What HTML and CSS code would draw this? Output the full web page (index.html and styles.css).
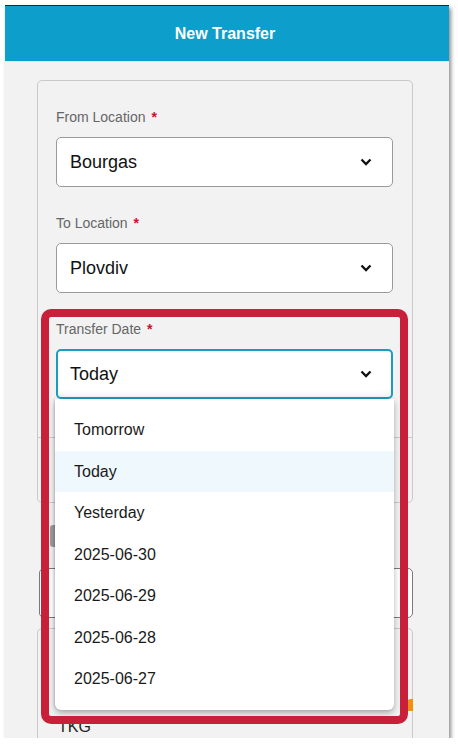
FILE: index.html
```html
<!DOCTYPE html>
<html>
    <head>
        <meta charset="utf-8">
        <title>New Transfer</title>
        <link rel="stylesheet" href="styles.css">
    </head>
    <body>
        <div class="screen">
            <header class="topbar">New Transfer</header>

            <main class="content">
                <section class="card">
                    <div class="field">
                        <label class="field-label">From Location <span class="req">*</span></label>
                        <div class="select">
                            <span>Bourgas</span>
                            <svg class="chevron" width="12" height="8" viewBox="0 0 12 8"><path d="M1.5 1.5l4.5 4.5 4.5-4.5"/></svg>
                        </div>
                    </div>

                    <div class="field">
                        <label class="field-label">To Location <span class="req">*</span></label>
                        <div class="select">
                            <span>Plovdiv</span>
                            <svg class="chevron" width="12" height="8" viewBox="0 0 12 8"><path d="M1.5 1.5l4.5 4.5 4.5-4.5"/></svg>
                        </div>
                    </div>

                    <div class="field field-open">
                        <label class="field-label">Transfer Date <span class="req">*</span></label>
                        <div class="select is-focused">
                            <span>Today</span>
                            <svg class="chevron" width="12" height="8" viewBox="0 0 12 8"><path d="M1.5 1.5l4.5 4.5 4.5-4.5"/></svg>
                        </div>
                        <ul class="dropdown">
                            <li>Tomorrow</li>
                            <li class="active">Today</li>
                            <li>Yesterday</li>
                            <li>2025-06-30</li>
                            <li>2025-06-29</li>
                            <li>2025-06-28</li>
                            <li>2025-06-27</li>
                        </ul>
                    </div>

                    <div class="card-foot"></div>
                </section>

                <div class="btn-stub"></div>
                <div class="input-box"></div>

                <section class="card card-items">
                    <span class="item-code">TKG</span>
                    <span class="flag"></span>
                </section>
            </main>

            <div class="highlight"></div>
        </div>
    </body>
</html>
```

FILE: styles.css
```css
body {
    margin: 0;
    padding: 0;
    background: #ffffff;
    font-family: "Liberation Sans", Arial, sans-serif;
}

.screen {
    position: relative;
    margin: 5px 0 0 5px;
    width: 444px;
    height: 733px;
    overflow: hidden;
    background: #f2f2f2;
    border-top: 1px solid #1e2a30;
    box-sizing: border-box;
    box-shadow: 2px 3px 4px rgba(0, 0, 0, 0.45);
}

.topbar {
    height: 55px;
    line-height: 55px;
    background: #0d9ecb;
    border-bottom: 1px solid #d3ebf3;
    color: #ffffff;
    font-size: 16px;
    font-weight: bold;
    text-align: center;
    padding-right: 4px;
}

.content {
    padding: 18px 36px 0 32px;
}

.card {
    border: 1px solid #c9c9c9;
    border-radius: 5px;
    padding: 28px 19px 0 18px;
}

.field + .field {
    margin-top: 28px;
}

.field-label {
    display: block;
    font-size: 14px;
    line-height: 17px;
    color: #666666;
    margin-bottom: 11px;
}

.req {
    color: #c8102e;
    font-weight: bold;
    margin-left: 2px;
}

.select {
    display: flex;
    align-items: center;
    justify-content: space-between;
    height: 50px;
    box-sizing: border-box;
    padding: 0 20px 0 13px;
    background: #ffffff;
    border: 1px solid #9a9a9a;
    border-radius: 5px;
    font-size: 18px;
    color: #111111;
}

.select.is-focused {
    border: 2px solid #1b9bbd;
    padding-left: 12px;
    padding-right: 19px;
    box-shadow: inset 0 -6px 8px -6px rgba(0, 0, 0, 0.12);
}

.chevron {
    fill: none;
    stroke: #111111;
    stroke-width: 2.3;
}

.field-open {
    position: relative;
}

.dropdown {
    position: absolute;
    top: 100%;
    left: -1px;
    right: -1px;
    margin: 0;
    padding: 10px 0;
    list-style: none;
    background: #ffffff;
    border-radius: 0 0 6px 6px;
    box-shadow: 0 3px 6px rgba(0, 0, 0, 0.3), -1px 0 2px rgba(0, 0, 0, 0.12);
    z-index: 10;
}

.dropdown li {
    height: 41.5px;
    line-height: 41.5px;
    padding-left: 19px;
    font-size: 16px;
    color: #1a1a1a;
}

.dropdown li.active {
    background: #eff8fd;
}

.card-foot {
    margin: 38px -19px 0 -18px;
    height: 64px;
    border-top: 1px solid #c9c9c9;
}

.btn-stub {
    margin: 22px 0 0 13px;
    width: 120px;
    height: 22px;
    background: #9c9c9c;
    border-radius: 3px;
}

.input-box {
    margin: 21px 0 0 2px;
    height: 50px;
    box-sizing: border-box;
    background: #ffffff;
    border: 1px solid #7a7a7a;
    border-radius: 5px;
}

.card-items {
    position: relative;
    margin-top: 10px;
    height: 140px;
    padding: 89px 0 0 20px;
}

.item-code {
    font-size: 16px;
    color: #222222;
}

.flag {
    position: absolute;
    right: -1px;
    top: 70px;
    width: 8px;
    height: 12px;
    background: #f0900f;
    border-radius: 6px 0 0 0;
}

.highlight {
    position: absolute;
    left: 36px;
    top: 303px;
    width: 367px;
    height: 415px;
    box-sizing: border-box;
    border: 8px solid #c8203a;
    border-radius: 10px;
    z-index: 20;
}
```
